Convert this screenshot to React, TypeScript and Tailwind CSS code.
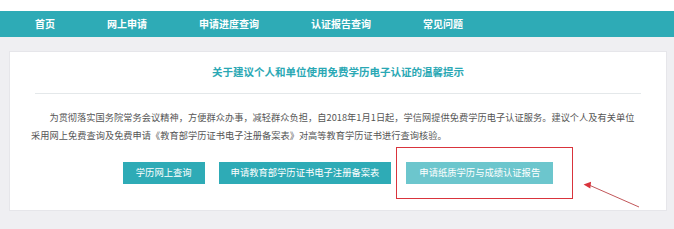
import React from "react";

const nav = ["首页", "网上申请", "申请进度查询", "认证报告查询", "常见问题"];

export default function App() {
  return (
    <div
      className="relative w-[674px] h-[229px] overflow-hidden bg-white"
      style={{ fontFamily: '"Noto Sans CJK SC", "Noto Sans", sans-serif' }}
    >
      <div className="h-[11px] bg-white" />
      <div className="h-[26px] bg-[#2eabb6] flex items-center pl-[9px]">
        {nav.map((n) => (
          <div key={n} className="px-[26px] text-[10px] font-bold text-white leading-none">
            {n}
          </div>
        ))}
      </div>
      <div className="bg-[#efeff2] pt-[14px] pl-[9px] pr-[7px] h-[192px]">
        <div className="relative bg-white border border-[#e6e6ea] h-[160px] px-[25px]">
          <div className="h-[42px] flex items-center justify-center border-b border-[#e4e8ea]">
            <span className="text-[10.5px] font-bold text-[#2aa8b4] leading-none">
              关于建议个人和单位使用免费学历电子认证的温馨提示
            </span>
          </div>
          <p className="mt-[14px] -ml-[4px] mr-0 text-[9.2px] tracking-[0.05px] leading-[18px] text-[#555] indent-[2em]">
            为贯彻落实国务院常务会议精神，方便群众办事，减轻群众负担，自2018年1月1日起，学信网提供免费学历电子认证服务。建议个人及有关单位采用网上免费查询及免费申请《教育部学历证书电子注册备案表》对高等教育学历证书进行查询核验。
          </p>
          <div className="mt-[18px] flex justify-center gap-[14px]">
            <div className="h-[22px] px-[13px] flex items-center bg-[#2eabb6] text-white text-[9.3px] leading-none">
              学历网上查询
            </div>
            <div className="h-[22px] px-[12px] flex items-center bg-[#2eabb6] text-white text-[9.3px] leading-none">
              申请教育部学历证书电子注册备案表
            </div>
            <div className="relative ml-[1px] h-[22px] px-[13px] flex items-center bg-[#6cc6cd] text-white text-[9.3px] leading-none">
              申请纸质学历与成绩认证报告
              <div className="absolute -left-[10px] -right-[20px] -top-[15px] -bottom-[15px] border-[1.5px] border-[#d9343c]" />
            </div>
          </div>
        </div>
      </div>
      <svg className="absolute left-0 top-0" width="674" height="229" viewBox="0 0 674 229">
        <line x1="639" y1="207" x2="589" y2="185" stroke="#c2575a" strokeWidth="1" />
        <polygon points="584,183 592,183 589,189" fill="#d9343c" transform="rotate(-20 588 185)" />
      </svg>
    </div>
  );
}
